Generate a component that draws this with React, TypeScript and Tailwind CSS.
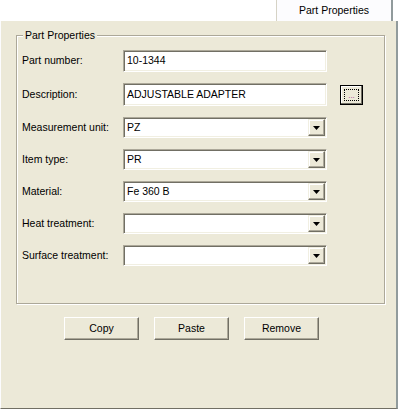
import React from "react";

const font = { fontFamily: '"Liberation Sans", Arial, sans-serif' };

function TextBox({ value, tall }: { value: string; tall?: boolean }) {
  return (
    <div
      className={`w-[204px] ${tall ? "h-[23px]" : "h-[22px]"} bg-white border border-t-[#aca899] border-l-[#aca899] border-b-white border-r-white shadow-[inset_1px_1px_0_#716f64,inset_-1px_-1px_0_#f1efe2] flex items-center pl-[3px] text-[10.5px] text-black`}
    >
      {value}
    </div>
  );
}

function Combo({ value }: { value: string }) {
  return (
    <div className="w-[204px] h-[21px] bg-white border border-t-[#aca899] border-l-[#aca899] border-b-white border-r-white shadow-[inset_1px_1px_0_#716f64,inset_-1px_-1px_0_#f1efe2] flex items-center pl-[3px] pr-[1px] text-[10.5px] text-black">
      <span className="flex-1">{value}</span>
      <div className="w-[17px] h-[17px] bg-[#ECE9D8] border border-t-[#f1efe2] border-l-[#f1efe2] border-b-[#716f64] border-r-[#716f64] shadow-[inset_-1px_-1px_0_#aca899,inset_1px_1px_0_#fff] flex items-center justify-center">
        <svg width="7" height="4" viewBox="0 0 7 4">
          <polygon points="0,0 7,0 3.5,4" fill="#000" />
        </svg>
      </div>
    </div>
  );
}

function Btn({ label }: { label: string }) {
  return (
    <div className="w-[75px] h-[23px] bg-[#ECE9D8] border border-t-white border-l-white border-b-[#716f64] border-r-[#716f64] shadow-[inset_-1px_-1px_0_#aca899] flex items-center justify-center text-[10.5px] text-black">
      {label}
    </div>
  );
}

export default function App() {
  const rows: { label: string; kind: "text" | "combo"; value: string; tall?: boolean; ell?: boolean }[] = [
    { label: "Part number:", kind: "text", value: "10-1344" },
    { label: "Description:", kind: "text", value: "ADJUSTABLE ADAPTER", tall: true, ell: true },
    { label: "Measurement unit:", kind: "combo", value: "PZ" },
    { label: "Item type:", kind: "combo", value: "PR" },
    { label: "Material:", kind: "combo", value: "Fe 360 B" },
    { label: "Heat treatment:", kind: "combo", value: "" },
    { label: "Surface treatment:", kind: "combo", value: "" },
  ];
  return (
    <div className="w-[398px] h-[409px] flex flex-col bg-white" style={font}>
      <div className="h-[21px] flex justify-end pr-[5px] bg-white">
        <div className="w-[117px] h-[21px] bg-[#fcfcfe] border-l border-l-[#d6d3c6] border-r-2 border-r-[#919b9c] flex items-center justify-center text-[10.5px] text-black pt-[1px]">
          Part Properties
        </div>
      </div>
      <div className="flex-1 bg-[#ECE9D8] border-l border-l-[#fcfcfe] border-r-2 border-r-[#919b9c] border-b border-b-[#716f64] pl-[15px] pt-[14px] flex flex-col">
        <div className="relative w-[369px] h-[269px] border border-[#aca899] shadow-[inset_1px_1px_0_#fff,1px_1px_0_#fff] pl-[5px] pt-[14px]">
          <span className="absolute left-[6px] top-[-8px] px-[2px] bg-[#ECE9D8] text-[10.5px] leading-[14px] text-black">
            Part Properties
          </span>
          <div className="flex flex-col gap-[11px]">
            {rows.map((r) => (
              <div key={r.label} className="flex items-center">
                <div className="w-[101px] text-[10.5px] text-black">{r.label}</div>
                {r.kind === "text" ? <TextBox value={r.value} tall={r.tall} /> : <Combo value={r.value} />}
                {r.ell && (
                  <div className="ml-[13px] w-[23px] h-[20px] border border-black bg-[#ECE9D8] shadow-[inset_-1px_-1px_0_#716f64,inset_1px_1px_0_#fff] flex items-center justify-center">
                    <div className="w-[15px] h-[12px] border border-dotted border-black flex items-end justify-center">
                      <span className="text-[8px] leading-[8px] text-[#a0308f] tracking-[0px]">...</span>
                    </div>
                  </div>
                )}
              </div>
            ))}
          </div>
        </div>
        <div className="mt-[13px] pl-[48px] flex gap-[15px]">
          <Btn label="Copy" />
          <Btn label="Paste" />
          <Btn label="Remove" />
        </div>
      </div>
    </div>
  );
}
